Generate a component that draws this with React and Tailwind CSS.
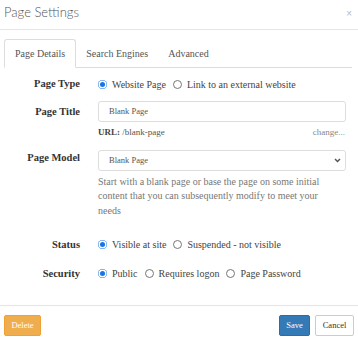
import React from "react";

const serif = { fontFamily: '"Liberation Serif", "Times New Roman", serif' };

function Radio({ checked, label }) {
  return (
    <span className="inline-flex items-center gap-[5px] mr-[7px]">
      {checked ? (
        <span className="w-[9px] h-[9px] rounded-full bg-[#1a73e8] flex items-center justify-center">
          <span className="w-[5px] h-[5px] rounded-full bg-[#1a73e8] ring-[1.5px] ring-white" />
        </span>
      ) : (
        <span className="w-[9px] h-[9px] rounded-full border border-[#767676] bg-white" />
      )}
      <span>{label}</span>
    </span>
  );
}

function Row({ label, children, className = "" }) {
  return (
    <div className={"flex " + className}>
      <div className="w-[80px] text-right font-bold text-[#333] shrink-0 text-[10.5px]">{label}</div>
      <div className="ml-[18px] w-[248px]">{children}</div>
    </div>
  );
}

export default function App() {
  return (
    <div className="w-[358px] h-[338px] bg-white text-[#333] overflow-hidden" style={serif}>
      {/* Header */}
      <div className="h-[30px] border-b border-[#e5e5e5] flex items-center justify-between px-[4px] pb-[3px]">
        <span className="text-[13px] text-[#555] font-light" style={{ fontFamily: 'Lato, sans-serif' }}>Page Settings</span>
        <span className="text-[10px] text-[#bbb] mr-[2px]" style={{ fontFamily: '"Liberation Sans", sans-serif' }}>×</span>
      </div>

      {/* Tabs */}
      <div className="mt-[9px] mx-[4px] w-[348px] flex border-b border-[#ddd] h-[29px] text-[10px]">
        <div className="px-[10px] flex items-center border border-[#ddd] border-b-white rounded-t-[3px] bg-white -mb-px text-[#555]">Page Details</div>
        <div className="px-[10px] flex items-center text-[#555]">Search Engines</div>
        <div className="px-[10px] flex items-center text-[#555]">Advanced</div>
      </div>

      {/* Body */}
      <div className="text-[10px] text-[#444]">
        <Row label="Page Type" className="mt-[9px] items-center h-[14px]">
          <div className="flex items-center"><Radio checked label="Website Page" /><Radio label="Link to an external website" /></div>
        </Row>

        <Row label="Page Title" className="mt-[10px] items-center">
          <div className="h-[21px] border border-[#ddd] rounded-[3px] flex items-center px-[10px] text-[8.5px] text-[#555]">Blank Page</div>
        </Row>
        <Row label="" className="mt-[4px]">
          <div className="flex justify-between text-[9px]">
            <span><span className="font-bold text-[#444]">URL:</span> <span className="text-[#555]">/blank-page</span></span>
            <span className="text-[#888] mr-[1px]">change...</span>
          </div>
        </Row>

        <Row label="Page Model" className="mt-[10px] items-start">
          <div className="h-[21px] border border-[#ddd] rounded-[3px] flex items-center justify-between px-[10px] text-[8.5px] text-[#555]">
            <span>Blank Page</span>
            <svg width="7" height="5" viewBox="0 0 7 5" className="mr-[-6px]"><path d="M1 1 L3.5 3.5 L6 1" stroke="#555" strokeWidth="1.5" fill="none" /></svg>
          </div>
          <p className="mt-[4px] text-[10px] leading-[14.5px] text-[#777] pr-[8px]">
            Start with a blank page or base the page on some initial content that you can subsequently modify to meet your needs
          </p>
        </Row>

        <Row label="Status" className="mt-[19px] items-center">
          <div className="flex items-center"><Radio checked label="Visible at site" /><Radio label="Suspended - not visible" /></div>
        </Row>

        <Row label="Security" className="mt-[13px] items-center">
          <div className="flex items-center"><Radio checked label="Public" /><Radio label="Requires logon" /><Radio label="Page Password" /></div>
        </Row>
      </div>

      {/* Footer */}
      <div className="mt-[23px] border-t border-[#e5e5e5] px-[4px] pt-[9px] flex justify-between text-[8.5px]">
        <button className="h-[21px] w-[37px] bg-[#f0ad4e] border border-[#eea236] text-white rounded-[2px]">Delete</button>
        <div className="flex gap-[5px]">
          <button className="h-[21px] w-[31px] bg-[#337ab7] border border-[#2e6da4] text-white rounded-[2px]">Save</button>
          <button className="h-[21px] w-[39px] bg-white border border-[#ccc] text-[#333] rounded-[2px]">Cancel</button>
        </div>
      </div>
    </div>
  );
}
